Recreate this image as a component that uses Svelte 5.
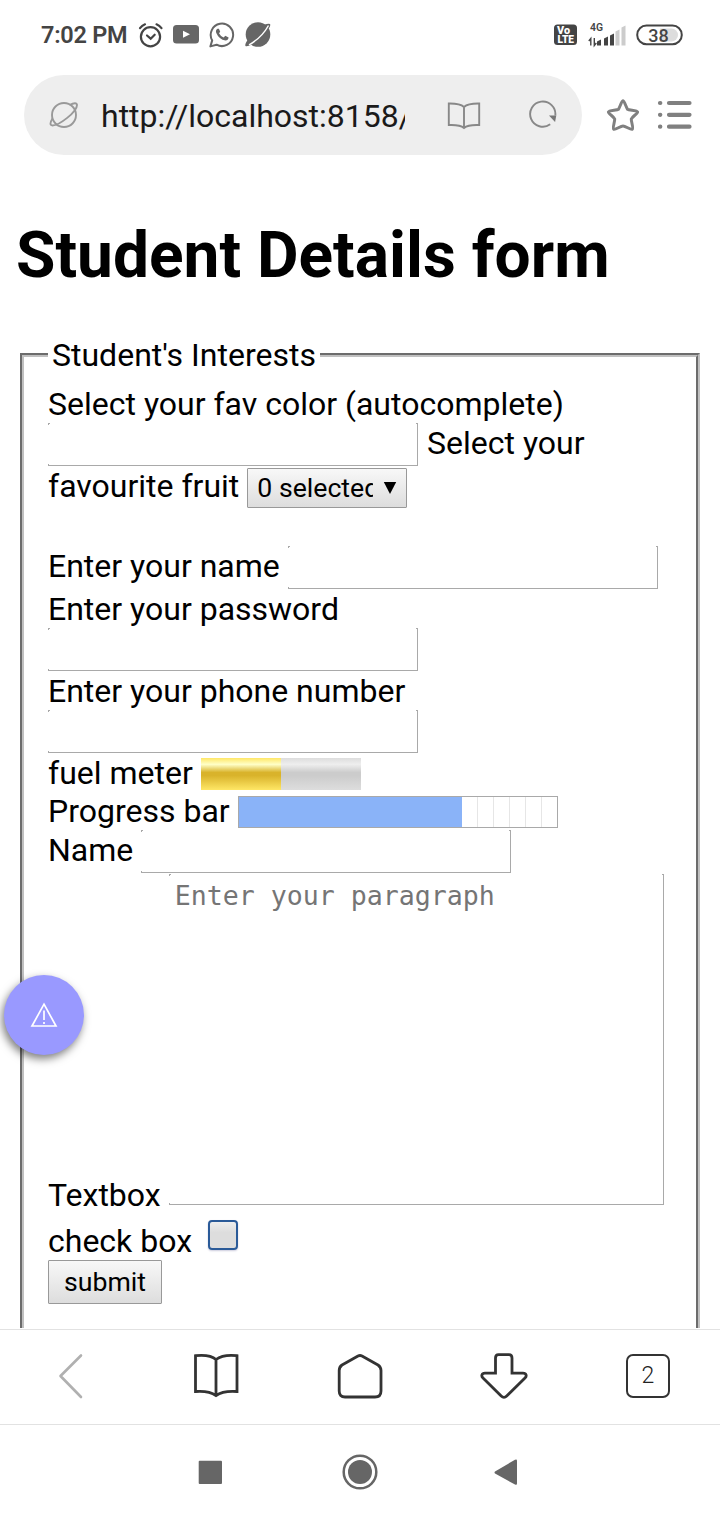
<script>
  const bars = [
    { x: 9, h: 6, on: true },
    { x: 16, h: 9, on: true },
    { x: 22, h: 12, on: true },
    { x: 27.5, h: 16, on: false },
    { x: 33.5, h: 20, on: false }
  ];
</script>

<div class="screen">
  <header class="status">
    <span class="time">7:02 PM</span>
    <svg class="alarm" width="26" height="28" viewBox="0 0 26 28" fill="none" stroke="#444" stroke-width="2.200" stroke-linecap="round">
      <circle cx="12.500" cy="15.700" r="9.600" />
      <path d="M9 14.500l3.700 3.200 4-4M2 7.200Q4 4.500 7 3.300M23.500 7.200Q21.500 4.500 18.500 3.300" />
    </svg>
    <svg class="tube" width="26" height="28" viewBox="0 0 26 28">
      <rect y="4" width="26" height="18.500" rx="3.500" fill="#666" />
      <path d="M10 9.800v7l7-3.500z" fill="#fff" />
    </svg>
    <svg class="whats" width="26" height="28" viewBox="0 0 26 28">
      <path d="M1.400 25.400L3.200 19.400A11.200 11.200 0 1 1 7.600 23.700Z" fill="none" stroke="#666" stroke-width="2" stroke-linejoin="round" />
      <path d="M8.500 7.800Q6.200 9.200 7.300 12Q10 18.300 16.500 19.600Q19.200 19.400 19.600 16.500L16.300 14.700L14.600 16.500Q11.500 15.300 10 12.300L11.200 10.800L9.900 7.800Z" fill="#666" />
    </svg>
    <svg class="globe" width="28" height="28" viewBox="0 0 28 28">
      <circle cx="14" cy="13.500" r="12.300" fill="#666" />
      <path d="M20 4Q24.500 2 26 3Q27 4.500 24.500 8M3.500 19Q.5 23.500 1.500 25Q3 26 8 23.500" fill="#666" />
      <path d="M5 23.800Q17.500 17 24.500 4.500" fill="none" stroke="#fff" stroke-width="1.500" />
    </svg>
    <span class="spring"></span>
    <svg class="volte" width="24" height="22" viewBox="0 0 24 22">
      <rect x="0" y=".5" width="23" height="20.500" rx="3.500" fill="#444" />
      <g fill="#fff" font-family="Roboto, sans-serif" font-weight="900">
        <text x="3" y="10" font-size="10" textLength="13" lengthAdjust="spacingAndGlyphs">Vo</text>
        <text x="3.500" y="19" font-size="10" textLength="16.500" lengthAdjust="spacingAndGlyphs">LTE</text>
      </g>
    </svg>
    <svg class="signal" width="40" height="26" viewBox="0 0 40 26">
      <text x="2" y="8.500" font-size="10" font-weight="600" font-family="Roboto, sans-serif" fill="#444" textLength="13" lengthAdjust="spacingAndGlyphs">4G</text>
      <path d="M2.800 23.500V16.500L.8 19M6.300 16V23.500L8.300 21" fill="none" stroke="#444" stroke-width="1.400" />
      {#each bars as bar}
        <path d="M{bar.x} 23.500v-{bar.h - 2}l4-2v{bar.h}z" fill={bar.on ? '#444' : '#ccc'} />
      {/each}
    </svg>
    <svg class="battery" width="48" height="24" viewBox="0 0 48 24">
      <rect x="1.200" y="2.600" width="44.600" height="18.600" rx="9.300" fill="#fff" stroke="#444" stroke-width="2" />
      <path d="M24 5.500h11.500a6.500 6.500 0 0 1 0 13H24z" fill="#ddd" />
      <text x="22.500" y="18.500" text-anchor="middle" font-size="18" font-weight="500" font-family="Roboto, sans-serif" fill="#444">38</text>
    </svg>
  </header>

  <div class="toolbar">
    <div class="address">
      <svg width="30" height="30" viewBox="0 0 30 30" fill="none" stroke="#999" stroke-width="1.900">
        <circle cx="15" cy="15" r="12" />
        <path d="M20.500 5C25 2.700 28 2.600 28 5C28 12 10 25.500 3.500 25.500C.7 25.500 1 22.500 3.500 18.500" />
      </svg>
      <span class="url">http://localhost:8158/</span>
      <svg class="reader" width="34" height="30" viewBox="0 0 34 30" fill="none" stroke="#888" stroke-width="1.900">
        <path d="M17 7Q13 3.300 1.800 3.500V25Q13 24.500 17 28Q21 24.500 32.200 25V3.500Q21 3.300 17 7ZM17 7V28" />
      </svg>
      <svg class="reload" width="30" height="30" viewBox="0 0 30 30">
        <path d="M22.200 24.300A12.600 12.600 0 1 1 27.300 15.500" fill="none" stroke="#888" stroke-width="1.900" />
        <path d="M21 15.500h7.300l-1.200 6.500z" fill="#777" />
      </svg>
    </div>
    <svg class="star" width="34" height="34" viewBox="0 0 34 34" fill="none" stroke="#808080" stroke-width="3" stroke-linejoin="round">
      <path d="M17 2.800C18.500 3 20.200 9.600 21.500 11.200C23.200 12.500 31 12 31.600 14C31.800 15.600 26.200 18.600 25.300 21C25 23.200 27.800 30.200 26.200 31.300C24.500 32 19.500 28 17 28C14.500 28 9.500 32 7.800 31.300C6.200 30.200 9 23.200 8.700 21C7.800 18.600 2.200 15.600 2.400 14C3 12 10.800 12.500 12.500 11.200C13.800 9.600 15.500 3 17 2.800Z" />
    </svg>
    <svg class="menu" width="36" height="32" viewBox="0 0 36 32" stroke="#808080" stroke-width="4.200" stroke-linecap="round">
      <path d="M3 4h.3M3 15.800h.3M3 27.700h.3M12 4h20.500M12 15.800h20.500M12 27.700h20.500" />
    </svg>
  </div>

  <main>
    <h1>Student Details form</h1>
    <fieldset>
      <legend>Student's Interests</legend>
      <div class="row"><label for="color">Select your fav color (autocomplete)</label></div>
      <div class="row shared"><span id="color" class="field"></span><span>Select your</span></div>
      <div class="row fruit"><span>favourite fruit</span><span class="select"><span>0 selected</span><svg width="14" height="14" viewBox="0 0 14 14"><path d="M.8 1h12.400L7 13z" /></svg></span></div>
      <div class="row name"><span>Enter your name</span><span class="field"></span></div>
      <div class="row">Enter your password</div>
      <div class="row lone"><span class="field"></span></div>
      <div class="row">Enter your phone number</div>
      <div class="row lone"><span class="field"></span></div>
      <div class="row bar"><span>fuel meter</span><span class="meter"><i style="width: 50%"></i></span></div>
      <div class="row bar"><span>Progress bar</span><span class="progress"><i style="width: 70.300%"></i></span></div>
      <div class="row label-top"><span>Name</span><span class="field"></span></div>
      <div class="row para"><span>Textbox</span><span class="field area">Enter your paragraph</span></div>
      <div class="row check"><span>check box</span><span class="box"></span></div>
      <div class="row"><button>submit</button></div>
    </fieldset>
    <div class="fab">
      <svg width="28" height="26" viewBox="0 0 28 26" fill="none" stroke="#fff" stroke-width="1.700">
        <path d="M14 2.200L26 24H2ZM14 8.500V18M14 20v2" />
      </svg>
    </div>
  </main>

  <nav class="browser">
    <svg width="48" height="48" viewBox="0 0 48 48" fill="none" stroke="#b0b0b0" stroke-width="2.600" stroke-linecap="round" stroke-linejoin="round">
      <path d="M33 3.500L12.500 24L33 45" />
    </svg>
    <svg width="48" height="48" viewBox="0 0 48 48" fill="none" stroke="#333" stroke-width="2.800">
      <path d="M24 7.500Q18 2.200 3.500 3.700V39.500Q17 38.500 24 43.500Q31 38.500 45 39.500V3.700Q31 2.200 24 7.500ZM24 7.500V43.500" />
    </svg>
    <svg width="48" height="48" viewBox="0 0 48 48" fill="none" stroke="#333" stroke-width="2.800" stroke-linejoin="round">
      <path d="M22 4Q24 3 26 4L42 13Q45 15 45 18.500V39Q45 45 39 45H9Q3.200 45 3.200 39V18.500Q3.200 15 6 13Z" />
    </svg>
    <svg class="down" width="50" height="48" viewBox="0 0 50 48" fill="none" stroke="#333" stroke-width="2.800">
      <path d="M17.500 21.200V6Q17.500 2.700 20.500 2.700H31Q34 2.700 34 6V21.200H45C48.500 21.200 49 24 47 26L28.700 44Q26 46.800 23.200 44L5 26C3 24 3.500 21.200 7 21.200Z" />
    </svg>
    <span class="tabs">2</span>
  </nav>
  <nav class="system">
    <svg width="24" height="24"><rect width="23.300" height="23.300" x=".7" y=".7" rx="1" fill="#666" /></svg>
    <svg width="36" height="36"><circle cx="18" cy="18" r="16.300" fill="none" stroke="#666" stroke-width="2.500" /><circle cx="18" cy="18" r="12" fill="#666" /></svg>
    <svg width="24" height="28"><path d="M1 13.500L21 1.700Q23 1 23 2.500V25.500Q23 27.500 21 26.500L1 15.500Q0 14.500 1 13.500Z" fill="#666" /></svg>
  </nav>
</div>

<style>
  :global(body) { margin: 0; background: #fff; }
  .screen { width: 720px; height: 1520px; overflow: hidden; background: #fff; color: #000; font: 32px/38px Roboto, sans-serif; display: flex; flex-direction: column; }
  svg { display: block; flex: none; }
  .status { height: 70px; box-sizing: border-box; padding: 0 36px 0 41px; display: flex; align-items: center; }
  .time { font-size: 23.500px; font-weight: 600; letter-spacing: -.25px; color: #444; width: 97px; white-space: nowrap; }
  .alarm { margin-right: 9px; }
  .tube { margin-right: 10px; }
  .whats { margin-right: 9px; }
  .spring { flex: 1; }
  .volte { margin-right: 10px; }
  .signal { margin: 0 8px 0 0; }
  .toolbar { height: 90px; display: flex; align-items: center; padding-left: 24px; }
  .address { width: 558px; height: 80px; border-radius: 40px; background: #eee; display: flex; align-items: center; box-sizing: border-box; padding-left: 25px; }
  .url { width: 304px; margin: 2px 0 0 22px; overflow: hidden; white-space: nowrap; color: #1a1a1a; }
  .reader { margin-left: 42px; }
  .reload { margin-left: 47px; }
  .star { margin-left: 24px; }
  .menu { margin-left: 17px; }
  main { height: 1168px; overflow: hidden; position: relative; flex: none; }
  h1 { margin: 58px 0 0 16px; font-size: 64px; line-height: 75px; font-weight: 700; white-space: nowrap; }
  fieldset { margin: 43px 20px 0; padding: 11px 24px 40px; border: 4px groove #c0c0c0; height: 1100px; box-sizing: border-box; min-width: 0; }
  legend { padding: 0 4px; height: 38px; white-space: nowrap; }
  .row { display: flex; align-items: flex-start; gap: 8px; white-space: nowrap; }
  .field {
    width: 370px; height: 43px; flex: none; box-sizing: border-box;
    background:
      linear-gradient(#a9a9a9, #a9a9a9) 100% 0 / 1px 100% no-repeat,
      linear-gradient(#a9a9a9, #a9a9a9) 0 100% / 100% 1px no-repeat,
      linear-gradient(#a9a9a9, #a9a9a9) 0 0 / 2px 1px no-repeat,
      linear-gradient(#a9a9a9, #a9a9a9) 0 0 / 1px 2px no-repeat,
      linear-gradient(#a9a9a9, #a9a9a9) 100% 0 / 2px 1px no-repeat,
      linear-gradient(#a9a9a9, #a9a9a9) 0 100% / 1px 2px no-repeat;
  }
  .shared { height: 44px; gap: 9px; }
  .shared span:last-child { margin-top: 1px; }
  .fruit { height: 79px; }
  .select { margin-top: 1px; width: 160px; height: 40px; box-sizing: border-box; border: 1px solid #999; border-radius: 1px; background: linear-gradient(#f8f8f8, #ddd); padding: 0 9px; display: flex; align-items: center; justify-content: space-between; font-size: 26.670px; }
  .select span { width: 116px; overflow: hidden; }
  .name { height: 44px; }
  .name > span:first-child { margin-top: 1px; }
  .lone { height: 44px; }
  .meter, .progress { margin-top: 4px; height: 32px; box-sizing: border-box; }
  .meter { width: 160px; background: linear-gradient(#ddd, #eee 20%, #ccc 45%, #ccc 55%, #ddd); }
  .meter i { display: block; height: 100%; background: linear-gradient(#ffe766, #ffffc7 20%, #d9b32b 45%, #d9b32b 55%, #ffe766); }
  .progress { width: 320px; border: 1px solid #a9a9a9; background: repeating-linear-gradient(90deg, #fff 0 14px, #e6e6e6 14px 15px, #fff 15px 16px); }
  .progress i { display: block; height: 100%; background: #8ab3f8; }
  .label-top { height: 44px; }
  .label-top > span:first-child { margin-top: 1px; }
  .para { height: 346px; }
  .para > span:first-child { margin-top: 302px; }
  .area { width: 495px; height: 331px; padding: 4px 6px; font: 26.600px/36px "DejaVu Sans Mono", monospace; color: #757575; }
  .check { height: 40px; gap: 16px; }
  .check > span:first-child { margin-top: 2px; }
  .box { width: 30px; height: 30px; box-sizing: border-box; border: 2px solid #2a5a98; border-radius: 4px; background: linear-gradient(#eee, #ddd 40%); box-shadow: 0 1px 2px #ccd; }
  button { width: 114px; height: 44px; padding: 0; border: 1px solid #999; border-radius: 1px; background: linear-gradient(#f8f8f8, #ddd); font: 26.670px Roboto, sans-serif; color: #000; }
  .fab { position: absolute; left: 4px; top: 815px; width: 80px; height: 80px; border-radius: 50%; background: #99f; box-shadow: -2px 4px 9px rgba(0, 0, 0, .5); display: flex; align-items: center; justify-content: center; }
  .browser { height: 96px; box-sizing: border-box; border-top: 1px solid #e2e2e2; border-bottom: 1px solid #e2e2e2; margin-top: 1px; display: flex; align-items: center; justify-content: space-between; padding: 0 50px 2px 48px; flex: none; }
  .down { margin: 0 2px 0 -2px; }
  .tabs { width: 44px; height: 44px; box-sizing: border-box; border: 2.800px solid #333; border-radius: 7px; display: flex; align-items: center; justify-content: center; font-size: 23px; font-weight: 300; color: #222; }
  .system { height: 95px; display: flex; align-items: center; padding: 0 0 1px 198px; box-sizing: border-box; }
  .system svg:nth-child(2) { margin-left: 119.500px; }
  .system svg:nth-child(3) { margin-left: 116.500px; }
</style>
